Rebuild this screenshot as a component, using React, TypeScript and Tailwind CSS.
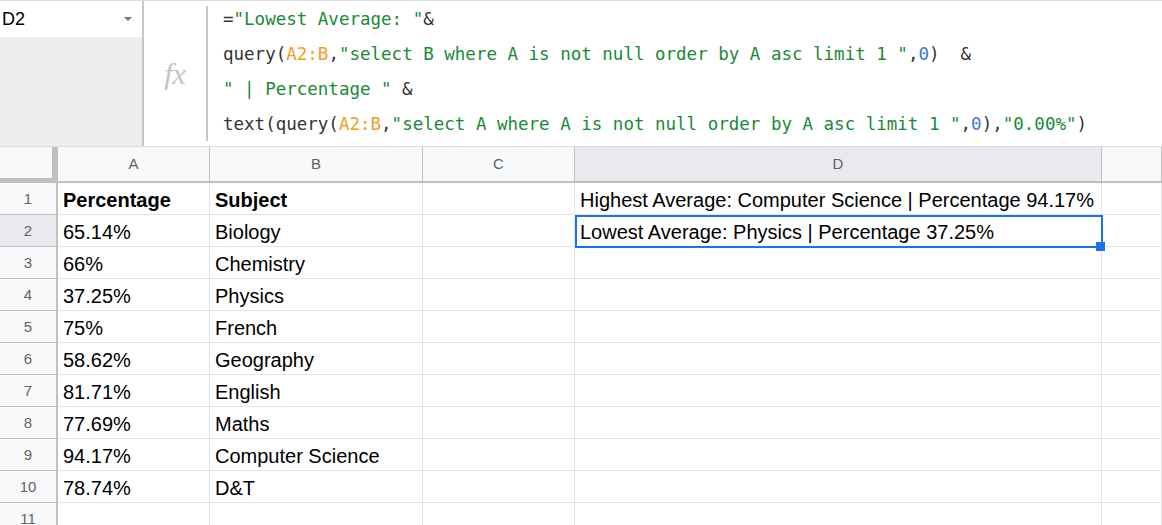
import React from "react"

const cols = [
    { label: "", w: "w-[58px]" },
    { label: "A", w: "w-[152px]" },
    { label: "B", w: "w-[213px]" },
    { label: "C", w: "w-[152px]" },
    { label: "D", w: "w-[527px]" },
    { label: "", w: "flex-1" },
]

const rows = [
    ["Percentage", "Subject", "", "Highest Average: Computer Science | Percentage 94.17%"],
    ["65.14%", "Biology", "", "Lowest Average: Physics | Percentage 37.25%"],
    ["66%", "Chemistry", "", ""],
    ["37.25%", "Physics", "", ""],
    ["75%", "French", "", ""],
    ["58.62%", "Geography", "", ""],
    ["81.71%", "English", "", ""],
    ["77.69%", "Maths", "", ""],
    ["94.17%", "Computer Science", "", ""],
    ["78.74%", "D&T", "", ""],
    ["", "", "", ""],
]

const G = ({ children }: { children: React.ReactNode }) => <span className="text-[#188a34]">{children}</span>
const O = ({ children }: { children: React.ReactNode }) => <span className="text-[#f29c1f]">{children}</span>
const N = ({ children }: { children: React.ReactNode }) => <span className="text-[#3c78d8]">{children}</span>

const FormulaBar = () => (
    <div className="flex h-[147px] border-t border-b border-[#dadce0]">
        {/* name box */}
        <div className="flex w-[142px] flex-col">
            <div className="flex h-[36px] items-center justify-between pl-[2px] pr-[10px] text-[18px] text-black">
                <span>D2</span>
                <svg width="8" height="4" viewBox="0 0 8 4">
                    <path d="M0 0h8L4 4z" fill="#777" />
                </svg>
            </div>
            <div className="flex-1 bg-[#eeeeee]" />
        </div>
        <div className="w-[2px] bg-[#c7c7c7]" />
        <div className="flex w-[62px] items-center justify-center">
            <span className="font-['Liberation_Serif',serif] text-[30px] italic text-[#c4c4c4]">fx</span>
        </div>
        <div className="my-[5px] w-[2px] bg-[#c7c7c7]" />
        <div className="whitespace-pre pl-[15px] pt-[1px] font-['DejaVu_Sans_Mono',monospace] text-[17.5px] leading-[35px] text-[#333]">
            <div>
                =<G>"Lowest Average: "</G>&
            </div>
            <div>
                query(<O>A2:B</O>,<G>"select B where A is not null order by A asc limit 1 "</G>,<N>0</N>)  &
            </div>
            <div>
                <G>" | Percentage "</G> &
            </div>
            <div>
                text(query(<O>A2:B</O>,<G>"select A where A is not null order by A asc limit 1 "</G>,<N>0</N>),
                <G>"0.00%"</G>)
            </div>
        </div>
    </div>
)

export default function App() {
    return (
        <div className="h-[525px] w-[1162px] overflow-hidden bg-white font-['Liberation_Sans',Arial,sans-serif]">
            <FormulaBar />

            {/* column headers */}
            <div className="flex h-[36px]">
                {cols.map((c, i) =>
                    i === 0 ? (
                        <div key={i} className={`${c.w} border-r-[6px] border-b-[5px] border-[#c0c0c0] bg-[#f8f9fa]`} />
                    ) : (
                        <div
                            key={i}
                            className={`${c.w} flex items-center justify-center border-r border-b-2 border-[#c0c0c0] pt-[1px] text-[15px] text-[#5f6368] ${
                                c.label === "D" ? "bg-[#e8eaed]" : "bg-[#f8f9fa]"
                            }`}
                        >
                            {c.label}
                        </div>
                    )
                )}
            </div>

            {/* rows */}
            {rows.map((r, ri) => (
                <div key={ri} className="flex h-[32px]">
                    <div
                        className={`w-[58px] flex items-center justify-center border-r-2 border-b border-[#c0c0c0] pt-[1px] text-[15px] text-[#5f6368] ${
                            ri === 1 ? "bg-[#e8eaed]" : "bg-[#f8f9fa]"
                        }`}
                    >
                        {ri + 1}
                    </div>
                    {cols.slice(1).map((c, ci) => (
                        <div
                            key={ci}
                            className={`${c.w} relative whitespace-nowrap border-r border-b border-[#e2e3e3] pl-[5px] pt-[4px] text-[20px] leading-[27px] text-black ${
                                ri === 0 ? "font-bold" : ""
                            }`}
                        >
                            {ri === 0 && ci === 3 ? <span className="font-normal">{r[ci]}</span> : r[ci] ?? ""}
                            {ri === 1 && ci === 3 && (
                                <>
                                    <div className="absolute left-0 top-0 z-10 h-[33px] w-[528px] border-2 border-[#1a73e8]" />
                                    <div className="absolute left-[521px] top-[27px] z-10 h-[9px] w-[9px] bg-[#1a73e8]" />
                                </>
                            )}
                        </div>
                    ))}
                </div>
            ))}
        </div>
    )
}
